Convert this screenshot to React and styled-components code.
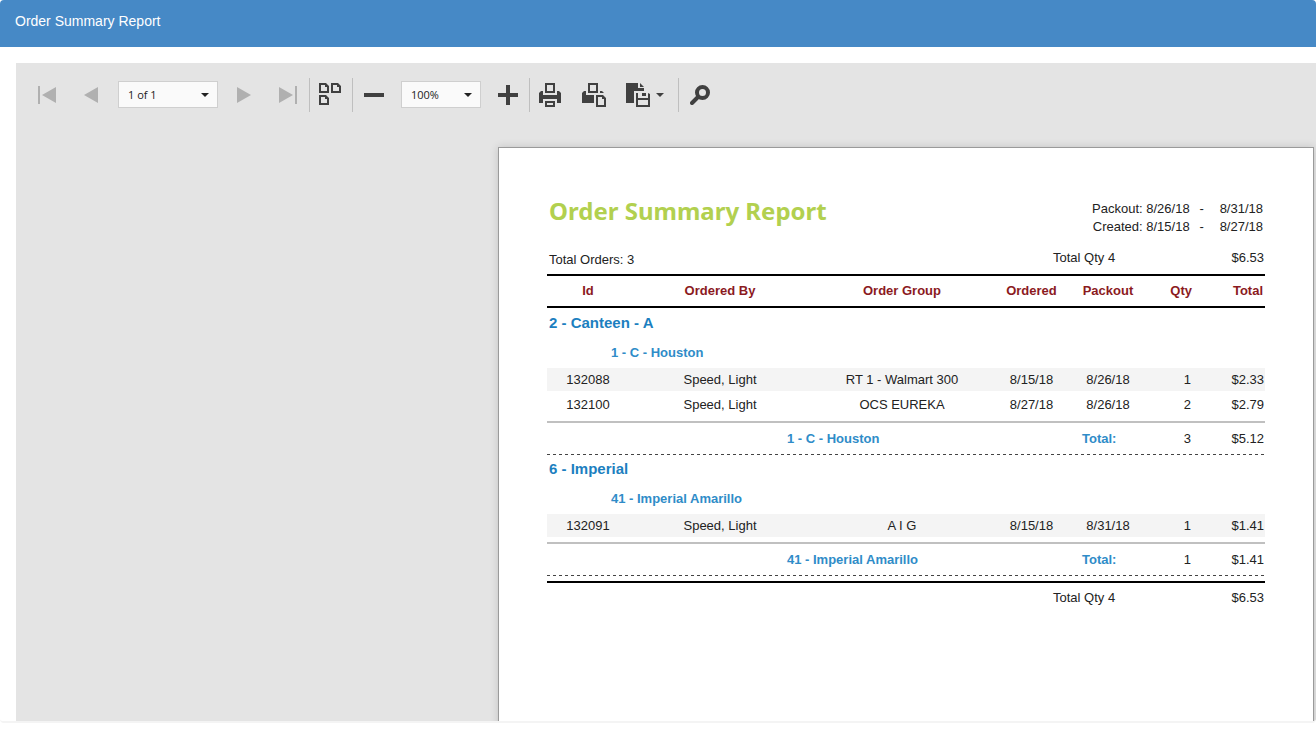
import React from 'react'
import styled, { createGlobalStyle } from 'styled-components'

const GlobalStyle = createGlobalStyle`
  * { box-sizing: border-box; }
  body {
    margin: 0;
    background: #fff;
    font-family: "Liberation Sans", Arial, sans-serif;
  }
`

const Panel = styled.section`
  display: flex;
  flex-direction: column;
  height: calc(100vh - 6px);
  min-height: 480px;
  border-bottom: 2px solid #f4f4f4;
  border-radius: 4px;
  overflow: hidden;
`

const PanelHeader = styled.header`
  flex: none;
  padding: 12px 15px 17px;
  background: #4689c6;
  color: #fff;
  h2 {
    margin: 0;
    font-size: 14px;
    font-weight: 400;
    line-height: 18px;
  }
`

const Viewer = styled.div`
  display: flex;
  flex-direction: column;
  flex: 1;
  min-height: 0;
  margin: 16px 0 0 16px;
  background: #e4e4e4;
`

const Toolbar = styled.div`
  display: flex;
  align-items: center;
  flex: none;
  height: 64px;
  padding-left: 9px;
`

const ToolButton = styled.button`
  display: flex;
  align-items: center;
  justify-content: center;
  width: ${props => props.$width || 44}px;
  height: 36px;
  padding: 0;
  border: 0;
  background: none;
  color: ${props => props.disabled ? '#b0b0b0' : '#404040'};
  svg {
    display: block;
    fill: currentColor;
  }
`

const MenuButton = styled(ToolButton)`
  gap: 6px;
  padding-right: 4px;
`

const Divider = styled.span`
  width: 1px;
  height: 34px;
  background: #bfbfbf;
`

const Picker = styled.div`
  display: grid;
  align-items: center;
  width: ${props => props.$width}px;
  margin: ${props => props.$margin};
  select, svg {
    grid-area: 1 / 1;
  }
  select {
    appearance: none;
    width: 100%;
    height: 27px;
    padding: 0 24px 0 9px;
    border: 1px solid #cfcfcf;
    border-radius: 0;
    background: #fafafa;
    color: #222;
    font: 11px "Open Sans", "Noto Sans", sans-serif;
  }
  svg {
    justify-self: end;
    margin-right: 9px;
    fill: #222;
    pointer-events: none;
  }
`

const Workspace = styled.div`
  display: flex;
  flex: 1;
  min-height: 0;
  overflow: hidden;
  padding: 20px 2px 0 0;
`

// US Letter at 96dpi
const Paper = styled.article`
  flex: none;
  width: 816px;
  min-height: 1056px;
  margin-left: auto;
  padding: 48px 48px 0;
  border: 1px solid #9a9a9a;
  background: #fff;
  color: #222;
  box-shadow: 0 0 8px rgba(0, 0, 0, 0.15);
  font-size: 13px;
  line-height: 18px;
`

const ReportHead = styled.div`
  display: flex;
  justify-content: space-between;
  height: 54px;
  padding: 0 2px;
  h1 {
    margin: 0;
    color: #b2d04f;
    font: bold 24px/30px "Noto Sans", "Open Sans", sans-serif;
  }
`

const Ranges = styled.dl`
  display: grid;
  grid-template-columns: auto 24px auto;
  align-content: start;
  margin: 4px 0 0;
  div {
    display: contents;
  }
  dt {
    text-align: right;
  }
  dd {
    margin: 0;
    text-align: center;
  }
  dd:last-child {
    padding-left: 6px;
  }
`

const Summary = styled.div`
  display: grid;
  grid-template-columns: 1fr 105px 106px;
  padding: 0 1px 0 2px;
  line-height: 16px;
  span:last-child {
    text-align: right;
  }
`

const TopSummary = styled(Summary)`
  padding-bottom: 6px;
  span:first-child {
    padding-top: 2px;
  }
`

const GrandTotal = styled(Summary)`
  margin-top: 5px;
  padding-top: 7px;
  border-top: 2px solid #000;
`

const Report = styled.table`
  width: 100%;
  table-layout: fixed;
  border-collapse: separate;
  border-spacing: 0;
  td, th {
    padding: 0;
    text-align: center;
    white-space: nowrap;
  }
`

const HeadRow = styled.tr`
  th {
    height: 34px;
    border: solid #000;
    border-width: 2px 0;
    color: #8b1a1e;
  }
  th:nth-child(6) {
    padding-right: 1px;
    text-align: right;
  }
  th:last-child {
    padding-right: 2px;
    text-align: right;
  }
`

const GroupRow = styled.tr`
  th {
    height: 30px;
    padding: 0 0 2px 2px;
    color: #1c7fc0;
    font-size: 15px;
    text-align: left;
  }
  thead + tbody > & th {
    height: 31px;
  }
`

const SubgroupRow = styled.tr`
  th {
    height: 29px;
    padding: 0 0 1px 64px;
    color: #2f8cc8;
    text-align: left;
  }
`

const DataRow = styled.tr`
  td {
    height: ${props => props.$last ? 28 : 25}px;
    border-bottom: ${props => props.$last ? 5 : 2}px solid #fff;
    background: ${props => props.$shaded ? '#f4f4f4' : '#fff'};
  }
  td:nth-child(6) {
    padding-right: 2px;
    text-align: right;
  }
  td:last-child {
    padding-right: 1px;
    text-align: right;
  }
`

const TotalRow = styled.tr`
  background: repeating-linear-gradient(90deg, #444 0 3px, transparent 3px 6px) 0 100% / 100% 1px no-repeat;
  th, td {
    height: 34px;
    padding-bottom: 1px;
    border-top: 2px solid #c0c0c0;
  }
  th {
    color: #2f8cc8;
    text-align: left;
  }
  th:first-child {
    padding-left: 240px;
  }
  th:nth-child(2) {
    padding-left: 12px;
  }
  td {
    padding-right: 2px;
    text-align: right;
  }
  td:last-child {
    padding-right: 1px;
  }
`

const groups = [
  {
    name: '2 - Canteen - A',
    location: '1 - C - Houston',
    qty: 3,
    total: '$5.12',
    orders: [
      ['132088', 'Speed, Light', 'RT 1 - Walmart 300', '8/15/18', '8/26/18', '1', '$2.33'],
      ['132100', 'Speed, Light', 'OCS EUREKA', '8/27/18', '8/26/18', '2', '$2.79']
    ]
  },
  {
    name: '6 - Imperial',
    location: '41 - Imperial Amarillo',
    qty: 1,
    total: '$1.41',
    orders: [
      ['132091', 'Speed, Light', 'A I G', '8/15/18', '8/31/18', '1', '$1.41']
    ]
  }
]

const Caret = () => (
  <svg width='8' height='4' viewBox='0 0 8 4' aria-hidden='true'><path d='M0 0h8L4 4z' /></svg>
)

const icons = {
  first: <svg width='20' height='18'><path d='M1 0h2v18H1zM19 1v16L5 9z' /></svg>,
  prev: <svg width='14' height='16'><path d='M14 0v16L0 8z' /></svg>,
  next: <svg width='14' height='16'><path d='M0 0v16l14-8z' /></svg>,
  last: <svg width='20' height='18'><path d='M17 0h2v18h-2zM1 1v16l14-8z' /></svg>,
  pages: (
    <svg width='24' height='24' fillRule='evenodd'>
      <path d='M0 0h7l3 3v7H0zM2 2v6h6V4H6V2zM12 0h7l3 3v7H12zM14 2v6h6V4h-2V2zM0 12h7l3 3v7H0zM2 14v6h6v-4H6v-2z' />
    </svg>
  ),
  minus: <svg width='20' height='4'><path d='M0 0h20v4H0z' /></svg>,
  plus: <svg width='20' height='20'><path d='M8 0h4v8h8v4h-8v8H8v-8H0V8h8z' /></svg>,
  print: (
    <svg width='24' height='24' fillRule='evenodd'>
      <path d='M6 0h10v10H6zM8 2v6h6V2zM0 10l2-2h2v4h14V8h2l2 2v10h-4v-4H4v4H0zM6 18h10v6H6zM8 20v2h6v-2z' />
    </svg>
  ),
  printPage: (
    <svg width='24' height='24' fillRule='evenodd'>
      <path d='M6 0h10v10H6zM8 2v6h6V2zM0 10l2-2h2v4h8v8H0zM18 8h2l2 2h-4zM14 12h7l3 3v9H14zM16 14v8h6v-6h-2v-2z' />
    </svg>
  ),
  save: (
    <svg width='24' height='24' fillRule='evenodd'>
      <path d='M0 0h12v5h6v3H8v12H0zM14 0l4 4h-4zM10 10h2v5h10v-5l2 1v13H10zM12 17v5h10v-5zM16 10h4v3h-4z' />
    </svg>
  ),
  search: (
    <svg width='20' height='20'>
      <circle cx='12.5' cy='7.5' r='5.5' fill='none' stroke='currentColor' strokeWidth='4' />
      <path d='M8 12l-6 6' stroke='currentColor' strokeWidth='4' strokeLinecap='round' />
    </svg>
  )
}

const Tool = ({ icon, label, ...rest }) => (
  <ToolButton type='button' aria-label={label} {...rest}>
    {icons[icon]}
  </ToolButton>
)

const ViewerToolbar = () => (
  <Toolbar>
    <Tool icon='first' label='First page' disabled />
    <Tool icon='prev' label='Previous page' disabled />
    <Picker $width={100} $margin='0 4px 1px 5px'>
      <select aria-label='Page'><option>1 of 1</option></select>
      <Caret />
    </Picker>
    <Tool icon='next' label='Next page' disabled />
    <Tool icon='last' label='Last page' $width={43} disabled />
    <Divider />
    <Tool icon='pages' label='Multipage view' $width={42} />
    <Divider />
    <Tool icon='minus' label='Zoom out' $width={42} />
    <Picker $width={80} $margin='0 6px 1px'>
      <select aria-label='Zoom'><option>100%</option></select>
      <Caret />
    </Picker>
    <Tool icon='plus' label='Zoom in' $width={42} />
    <Divider />
    <Tool icon='print' label='Print' $width={42} />
    <Tool icon='printPage' label='Print page' />
    <MenuButton type='button' aria-label='Export' $width={62}>
      {icons.save}
      <Caret />
    </MenuButton>
    <Divider />
    <Tool icon='search' label='Search' $width={42} />
  </Toolbar>
)

const Group = ({ name, location, qty, total, orders }) => (
  <tbody>
    <GroupRow><th colSpan='7' scope='rowgroup'>{name}</th></GroupRow>
    <SubgroupRow><th colSpan='7' scope='rowgroup'>{location}</th></SubgroupRow>
    {orders.map((order, i) => (
      <DataRow key={order[0]} $shaded={i % 2 === 0} $last={i === orders.length - 1}>
        {order.map((value, j) => <td key={j}>{value}</td>)}
      </DataRow>
    ))}
    <TotalRow>
      <th colSpan='4' scope='row'>{location}</th>
      <th scope='row'>Total:</th>
      <td>{qty}</td>
      <td>{total}</td>
    </TotalRow>
  </tbody>
)

const App = () => (
  <>
    <GlobalStyle />
    <Panel>
      <PanelHeader><h2>Order Summary Report</h2></PanelHeader>
      <Viewer>
        <ViewerToolbar />
        <Workspace>
          <Paper>
            <ReportHead>
              <h1>Order Summary Report</h1>
              <Ranges>
                <div><dt>Packout: 8/26/18</dt><dd>-</dd><dd>8/31/18</dd></div>
                <div><dt>Created: 8/15/18</dt><dd>-</dd><dd>8/27/18</dd></div>
              </Ranges>
            </ReportHead>
            <TopSummary>
              <span>Total Orders: 3</span>
              <span>Total Qty 4</span>
              <span>$6.53</span>
            </TopSummary>
            <Report>
              <colgroup>
                <col width='82' />
                <col width='182' />
                <col width='182' />
                <col width='77' />
                <col width='76' />
                <col width='47' />
                <col width='72' />
              </colgroup>
              <thead>
                <HeadRow>
                  <th>Id</th>
                  <th>Ordered By</th>
                  <th>Order Group</th>
                  <th>Ordered</th>
                  <th>Packout</th>
                  <th>Qty</th>
                  <th>Total</th>
                </HeadRow>
              </thead>
              {groups.map(group => <Group key={group.name} {...group} />)}
            </Report>
            <GrandTotal>
              <span />
              <span>Total Qty 4</span>
              <span>$6.53</span>
            </GrandTotal>
          </Paper>
        </Workspace>
      </Viewer>
    </Panel>
  </>
)

export default App
